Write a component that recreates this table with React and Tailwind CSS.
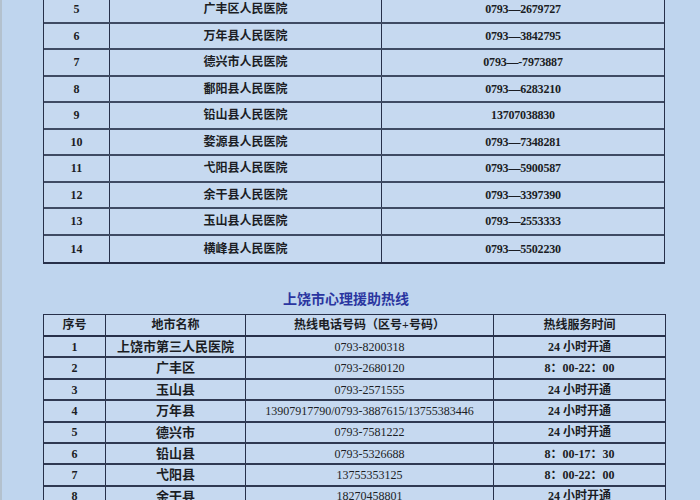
import React from "react";

const hospitals = [
  ["5", "广丰区人民医院", "0793—2679727"],
  ["6", "万年县人民医院", "0793—3842795"],
  ["7", "德兴市人民医院", "0793—-7973887"],
  ["8", "鄱阳县人民医院", "0793—6283210"],
  ["9", "铅山县人民医院", "13707038830"],
  ["10", "婺源县人民医院", "0793—7348281"],
  ["11", "弋阳县人民医院", "0793—5900587"],
  ["12", "余干县人民医院", "0793—3397390"],
  ["13", "玉山县人民医院", "0793—2553333"],
  ["14", "横峰县人民医院", "0793—5502230"],
];

const hotlines = [
  ["1", "上饶市第三人民医院", "0793-8200318", "24 小时开通"],
  ["2", "广丰区", "0793-2680120", "8：00-22：00"],
  ["3", "玉山县", "0793-2571555", "24 小时开通"],
  ["4", "万年县", "13907917790/0793-3887615/13755383446", "24 小时开通"],
  ["5", "德兴市", "0793-7581222", "24 小时开通"],
  ["6", "铅山县", "0793-5326688", "8：00-17：30"],
  ["7", "弋阳县", "13755353125", "8：00-22：00"],
  ["8", "余干县", "18270458801", "24 小时开通"],
];

const font = { fontFamily: '"Liberation Serif", "Noto Sans CJK SC", serif' };

export default function App() {
  return (
    <div
      className="w-[700px] h-[500px] overflow-hidden bg-[#bfd5ee] border-l-[2px] border-[#b3c1ce] text-[12px] text-[#1b1d24]"
      style={font}
    >
      <div className="pl-[41px] -mt-[3px]">
        {/* 医院列表 */}
        <div className="w-[622px] bg-[#c6d9f0] border-x-[1.5px] border-b-[2px] border-[#27304a]">
          {hospitals.map(([no, name, tel], i) => (
            <div
              key={no}
              className={
                "grid grid-cols-[66px_272px_1fr] h-[26.5px] items-stretch" +
                (i < hospitals.length - 1 ? " border-b-[2px] border-[#3f4b63]" : "")
              }
            >
              <div className="flex items-center justify-center font-bold border-r-[1.5px] border-[#27304a]">{no}</div>
              <div className="flex items-center justify-center font-semibold border-r-[1.5px] border-[#27304a]">{name}</div>
              <div className="flex items-center justify-center font-semibold tracking-[-0.2px]">{tel}</div>
            </div>
          ))}
        </div>

        {/* 心理援助热线 */}
        <div className="w-[622px] mt-[25px] mb-[5px] pr-[16px] h-[20px] flex items-center justify-center text-[14px] font-bold text-[#2a35a0]">
          上饶市心理援助热线
        </div>

        <div className="w-[623px] bg-[#c6d9f0] border-x-[1.5px] border-t-[1.5px] border-[#27304a]">
          <div className="grid grid-cols-[62px_140px_248px_1fr] h-[22px] border-b-[2px] border-[#27304a] font-bold">
            <div className="flex items-center justify-center border-r-[1.5px] border-[#27304a]">序号</div>
            <div className="flex items-center justify-center border-r-[1.5px] border-[#27304a]">地市名称</div>
            <div className="flex items-center justify-center border-r-[1.5px] border-[#27304a]">热线电话号码（区号+号码）</div>
            <div className="flex items-center justify-center">热线服务时间</div>
          </div>
          {hotlines.map(([no, city, tel, time]) => (
            <div
              key={no}
              className="grid grid-cols-[62px_140px_248px_1fr] h-[21.4px] border-b-[2px] border-[#2f3952]"
            >
              <div className="flex items-center justify-center font-bold border-r-[1.5px] border-[#27304a]">{no}</div>
              <div className="flex items-center justify-center font-semibold text-[13px] border-r-[1.5px] border-[#27304a]">{city}</div>
              <div className="flex items-center justify-center border-r-[1.5px] border-[#27304a]">{tel}</div>
              <div className="flex items-center justify-center font-semibold">{time}</div>
            </div>
          ))}
        </div>
      </div>
    </div>
  );
}
